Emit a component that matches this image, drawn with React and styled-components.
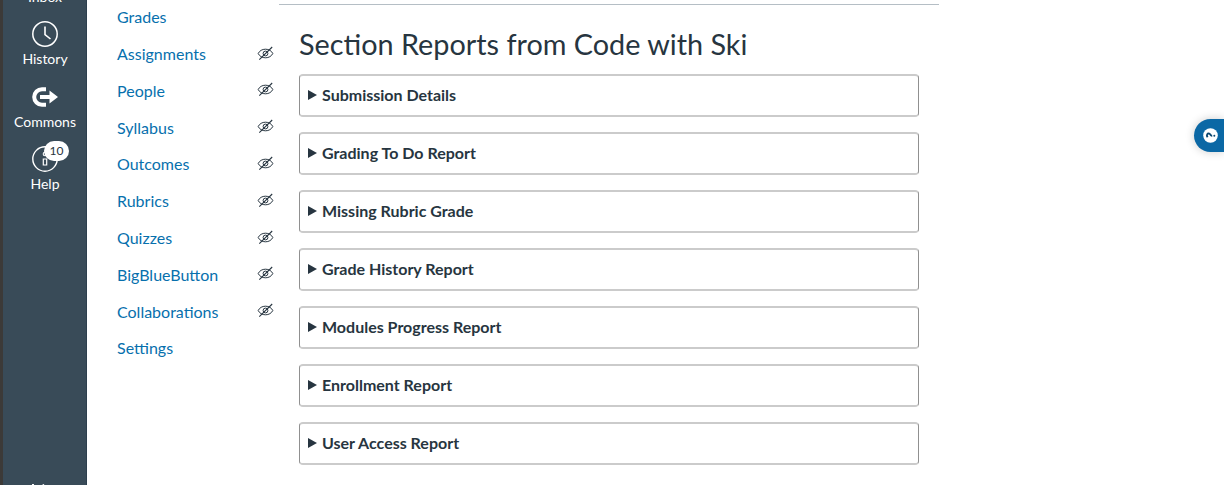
import React from "react";
import styled, { createGlobalStyle } from "styled-components";

const Global = createGlobalStyle`
  * { box-sizing: border-box; }
  body { margin: 0; background: #fff; color: #273540; font-family: Lato, "Liberation Sans", sans-serif; overflow: hidden; }
`;

const Page = styled.div`
  position: relative;
  display: flex;
  height: 485px;
  overflow: hidden;
`;

const Rail = styled.nav`
  display: flex;
  flex-direction: column;
  align-items: center;
  flex: none;
  width: 87px;
  height: 485px;
  padding-left: 1px;
  background: #394b58;
  border-left: 3px solid #3c3a38;
  border-right: 1px solid #2d3f4e;
  color: #fff;
`;

const RailItem = styled.div`
  position: relative;
  display: flex;
  flex-direction: column;
  align-items: center;
  width: 100%;
  height: 62.5px;
  flex: none;
`;

const InboxItem = styled(RailItem)`
  height: 21px;
  justify-content: flex-end;
  padding-bottom: 15px;
`;

const RailLabel = styled.span`
  margin-top: 3px;
  font-size: 14px;
  line-height: 18px;
  white-space: nowrap;
`;

const Badge = styled.span`
  position: absolute;
  left: 40px;
  top: -5px;
  width: 25px;
  height: 20px;
  border-radius: 10px;
  background: #fff;
  color: #273540;
  font-size: 12px;
  line-height: 19px;
  text-align: center;
`;

const CommonsSlot = styled.div`
  display: flex;
  align-items: center;
  height: 26px;
  padding-top: 1px;
`;

const Collapse = styled.div`
  margin-top: auto;
  height: 3px;
  overflow: hidden;
  margin-right: 14px;
`;

const CourseNav = styled.nav`
  flex: none;
  width: 192px;
  padding-left: 30px;
`;

const NavRow = styled.div`
  display: flex;
  align-items: center;
  justify-content: space-between;
  height: 36.8px;
  padding-right: 5px;
`;

const NavLink = styled.a`
  color: #0770ad;
  font-size: 16px;
  line-height: 20px;
  padding-bottom: 2.4px;
`;

const HiddenMark = styled.svg`
  display: block;
  margin-top: -4px;
`;

const Content = styled.main`
  flex: none;
  width: 660px;
  margin-top: 4px;
  border-top: 1px solid #b5bec5;
  padding: 21px 20px 0;
`;

const Title = styled.h2`
  margin: 0 0 12px;
  font-size: 28.8px;
  font-weight: 400;
  line-height: 36px;
  white-space: nowrap;
`;

const Reports = styled.div`
  display: flex;
  flex-direction: column;
  gap: 15px;
`;

const Report = styled.div`
  display: flex;
  align-items: center;
  height: 43px;
  padding: 0 0 2px 8px;
  border: 1px solid #909090;
  border-top: 2px solid #cbcbcb;
  border-bottom: 2px solid #cbcbcb;
  border-radius: 4px;
  font-size: 16px;
  font-weight: 700;
  line-height: 20px;
`;

const Marker = styled.svg`
  display: block;
  margin-right: 5px;
`;

const HelpTab = styled.div`
  position: absolute;
  right: 0;
  top: 119px;
  display: flex;
  align-items: center;
  width: 30px;
  height: 33px;
  padding-left: 9px;
  border-radius: 16.5px 0 0 16.5px;
  background: #0b68a5;
  box-shadow: 0 0 10px rgba(0, 0, 0, 0.2);
`;

const links = [
  ["Grades", false],
  ["Assignments", true],
  ["People", true],
  ["Syllabus", true],
  ["Outcomes", true],
  ["Rubrics", true],
  ["Quizzes", true],
  ["BigBlueButton", true],
  ["Collaborations", true],
  ["Settings", false],
];

const reports = [
  "Submission Details",
  "Grading To Do Report",
  "Missing Rubric Grade",
  "Grade History Report",
  "Modules Progress Report",
  "Enrollment Report",
  "User Access Report",
];

const ClockIcon = () => (
  <svg width="26" height="26" viewBox="0 0 26 26" fill="none" stroke="#fff">
    <circle cx="13" cy="13" r="12.2" strokeWidth="1.5" />
    <path d="M13 5.5V13.5L18.5 18" strokeWidth="1.6" />
  </svg>
);

const CommonsIcon = () => (
  <svg width="26" height="20" viewBox="0 0 26 20" fill="none">
    <path d="M14 2.2H10A7.8 7.8 0 0 0 10 17.8H14" stroke="#fff" strokeWidth="4" />
    <path d="M8 8H17.5V3.5L26 10L17.5 16.5V12H8Z" fill="#fff" />
  </svg>
);

const InfoIcon = () => (
  <svg width="26" height="26" viewBox="0 0 26 26" fill="none" stroke="#fff">
    <circle cx="13" cy="13" r="12.2" strokeWidth="1.4" />
    <circle cx="13" cy="8" r="1.8" strokeWidth="1.1" />
    <path d="M11.3 13H14.7V19H11.3Z" strokeWidth="1.2" />
  </svg>
);

const EyeOff = () => (
  <HiddenMark width="17" height="15" viewBox="0 0 17 15" fill="none" stroke="#273540">
    <path d="M1.2 7.5C2.5 4.7 5.3 3.2 8.5 3.2S14.5 4.7 15.8 7.5C14.5 10.3 11.7 11.8 8.5 11.8S2.5 10.3 1.2 7.5Z" strokeWidth="1" />
    <circle cx="8.5" cy="7.5" r="2.4" strokeWidth="1" />
    <path d="M2.3 13.7L15.2 1" strokeWidth="1.1" />
  </HiddenMark>
);

export default function App() {
  return (
    <>
      <Global />
      <Page>
        <Rail>
          <InboxItem>
            <RailLabel>Inbox</RailLabel>
          </InboxItem>
          <RailItem>
            <ClockIcon />
            <RailLabel>History</RailLabel>
          </RailItem>
          <RailItem>
            <CommonsSlot>
              <CommonsIcon />
            </CommonsSlot>
            <RailLabel>Commons</RailLabel>
          </RailItem>
          <RailItem>
            <InfoIcon />
            <Badge>10</Badge>
            <RailLabel>Help</RailLabel>
          </RailItem>
          <Collapse>
            <svg width="16" height="14" viewBox="0 0 16 14" fill="none" stroke="#fff" strokeWidth="2">
              <path d="M3 0V14M14 0.5L8 7L14 13" />
            </svg>
          </Collapse>
        </Rail>
        <CourseNav>
          {links.map(([name, hidden]) => (
            <NavRow key={name}>
              <NavLink>{name}</NavLink>
              {hidden && <EyeOff />}
            </NavRow>
          ))}
        </CourseNav>
        <Content>
          <Title>Section Reports from Code with Ski</Title>
          <Reports>
            {reports.map((name) => (
              <Report key={name}>
                <Marker width="9" height="10" viewBox="0 0 9 10">
                  <path d="M0 0L9 5L0 10Z" fill="#273540" />
                </Marker>
                {name}
              </Report>
            ))}
          </Reports>
        </Content>
        <HelpTab>
          <svg width="15" height="15" viewBox="0 0 15 15" fill="none">
            <circle cx="7.5" cy="7.5" r="7.3" fill="#fff" />
            <path d="M4.6 9.3C2.9 7 4.6 5 6.3 5.6C8 6.2 7.2 8 9.2 7.8" stroke="#0b4770" strokeWidth="1.9" />
            <circle cx="11.3" cy="7.8" r="1" fill="#0b4770" />
          </svg>
        </HelpTab>
      </Page>
    </>
  );
}
